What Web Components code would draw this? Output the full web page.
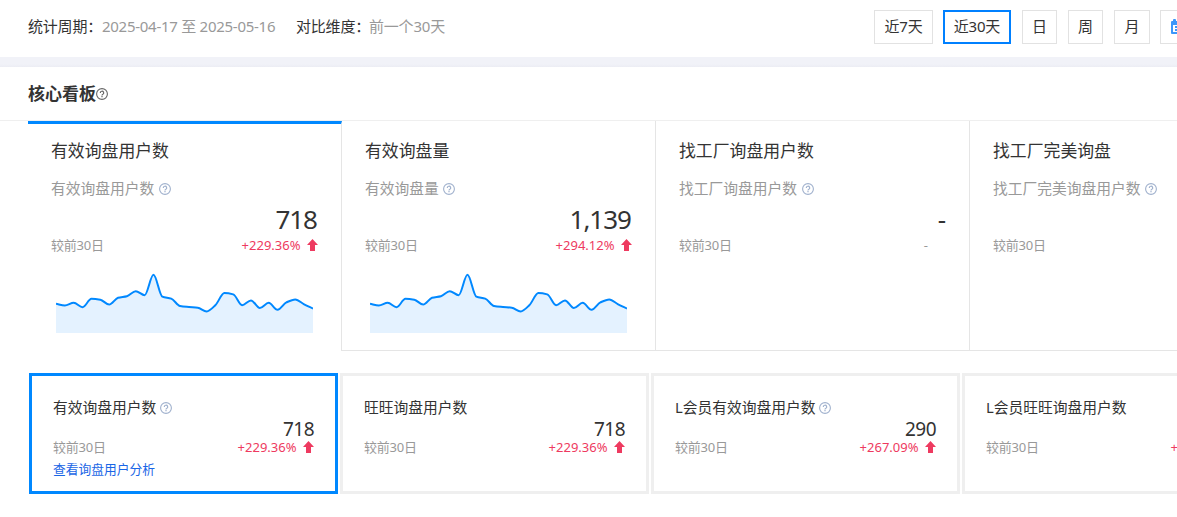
<!DOCTYPE html>
<html lang="zh-CN">
<head>
<meta charset="utf-8">
<title>核心看板</title>
<style>
    body {
        margin: 0;
        width: 1177px;
        height: 517px;
        overflow: hidden;
        background: #fff;
        color: #333;
        font-family: "Noto Sans", "Noto Sans CJK SC", sans-serif;
    }
</style>
</head>
<body>
<dash-board></dash-board>
<script>
class HelpIcon extends HTMLElement {
    constructor() {
        super();
        this.attachShadow({ mode: "open" });
    }

    connectedCallback() {
        this.shadowRoot.innerHTML = `
            <style>
            :host {
                display: block;
                flex: none;
                width: 12px;
                height: 12px;
                color: #a0b1cd;
            }
            svg { display: block; }
            </style>
            <svg width="12" height="12" viewBox="0 0 12 12" fill="none" stroke="currentColor">
                <circle cx="6" cy="6" r="5.4" stroke-width="1.1"/>
                <path d="M4.3 4.9a1.7 1.6 0 1 1 2.6 1.3q-.9.5-.9 1.2" stroke-width="1.2"/>
                <path d="M6 8.1v1.1" stroke-width="1.2"/>
            </svg>
        `;
    }
}
customElements.define("help-icon", HelpIcon);

class TrendRate extends HTMLElement {
    constructor() {
        super();
        this.attachShadow({ mode: "open" });
    }

    connectedCallback() {
        this.shadowRoot.innerHTML = `
            <style>
            :host {
                display: flex;
                align-items: center;
                gap: 6px;
                height: 18px;
                margin-right: 0.5px;
                font-size: 13px;
                line-height: 18px;
                color: #ee3a60;
                white-space: nowrap;
            }
            svg { display: block; }
            </style>
            <span><slot></slot></span>
            <svg width="11" height="12" viewBox="0 0 11 12"><path d="M5.5 0 11 6H8v6H3V6H0z" fill="#ee3a60"/></svg>
        `;
    }
}
customElements.define("trend-rate", TrendRate);

class SparkLine extends HTMLElement {
    constructor() {
        super();
        this.attachShadow({ mode: "open" });
    }

    connectedCallback() {
        this.render();
    }

    // monotone cubic through evenly spaced points
    curve(ys, step) {
        const d = ys.slice(1).map((y, i) => y - ys[i]);
        const m = ys.map((y, i) => {
            if (i === 0) return d[0];
            if (i === ys.length - 1) return d[i - 1];
            const a = d[i - 1], b = d[i];
            return a * b <= 0 ? 0 : (2 * a * b) / (a + b);
        });
        let path = `M0 ${ys[0]}`;
        for (let i = 1; i < ys.length; i++) {
            const x0 = (i - 1) * step, x1 = i * step;
            path += `C${x0 + step / 3} ${ys[i - 1] + m[i - 1] / 3} ${x1 - step / 3} ${ys[i] - m[i] / 3} ${x1} ${ys[i]}`;
        }
        return path;
    }

    render() {
        const ys = [30.8, 32.5, 29.8, 34.2, 25.8, 26.7, 31.6, 24.8, 23.2, 18.2, 22.2, 1.8, 23.6, 25.6, 33,
            34, 34.7, 38.4, 32, 20, 21.4, 32.2, 27.4, 35, 29.8, 36.8, 29.4, 26.4, 31.3, 35.6];
        const line = this.curve(ys, 257 / (ys.length - 1));
        this.shadowRoot.innerHTML = `
            <style>
            :host { display: block; width: 257px; height: 60px; }
            svg { display: block; }
            </style>
            <svg width="257" height="60" viewBox="0 0 257 60">
                <path d="${line}V60H0z" fill="#e4f2ff"/>
                <path d="${line}" fill="none" stroke="#0088ff" stroke-width="2"/>
            </svg>
        `;
    }
}
customElements.define("spark-line", SparkLine);

class DateButton extends HTMLElement {
    constructor() {
        super();
        this.attachShadow({ mode: "open" });
    }

    connectedCallback() {
        this.shadowRoot.innerHTML = `
            <style>
            :host {
                display: flex;
                flex: none;
                align-items: center;
                justify-content: center;
                box-sizing: border-box;
                height: 34px;
                padding-bottom: 2px;
                border: 1px solid #e2e2e2;
                font-size: 15px;
                line-height: 20px;
                letter-spacing: -0.2px;
                white-space: nowrap;
            }
            :host([active]) { border: 2px solid #0080ff; }
            </style>
            <slot></slot>
        `;
    }
}
customElements.define("date-button", DateButton);

class FilterBar extends HTMLElement {
    constructor() {
        super();
        this.attachShadow({ mode: "open" });
    }

    connectedCallback() {
        this.shadowRoot.innerHTML = `
            <style>
            :host {
                display: flex;
                box-sizing: border-box;
                width: 1177px;
                height: 57px;
                padding: 10px 0 0 28px;
                overflow: hidden;
                font-size: 15px;
                line-height: 32px;
                white-space: nowrap;
            }
            .period { flex: none; width: 268px; }
            .compare { flex: none; width: 578px; }
            .value { color: #999; }
            .period .value { letter-spacing: -0.27px; }
            .compare .value { letter-spacing: -0.2px; }
            .label { display: inline-block; width: 74px; letter-spacing: -0.2px; }
            .compare .label { width: 73px; }
            .buttons { display: flex; flex: none; }
            date-button { margin-right: 10px; }
            svg { display: block; flex: none; }
            </style>
            <div class="period"><span class="label">统计周期：</span><span class="value">2025-04-17 至 2025-05-16</span></div>
            <div class="compare"><span class="label">对比维度：</span><span class="value">前一个30天</span></div>
            <div class="buttons">
                <date-button style="width:59px">近7天</date-button>
                <date-button active style="width:68px;margin-right:11px">近30天</date-button>
                <date-button style="width:35px;margin-right:11px">日</date-button>
                <date-button style="width:35px;margin-right:11px">周</date-button>
                <date-button style="width:36px">月</date-button>
                <date-button style="width:36px">
                    <svg width="14" height="15" viewBox="0 0 14 15">
                        <path d="M1 2h1V1q0-1 1-1h1q1 0 1 1v1h4V1q0-1 1-1h1q1 0 1 1v1h1q1 0 1 1v11q0 1-1 1H1q-1 0-1-1V3q0-1 1-1z" fill="#3c96fa"/>
                        <path d="M2 6h10v7H2z" fill="#fff"/>
                        <path d="M4 7h2v2H4zM8 7h2v2H8zM4 10h2v2H4zM8 10h2v2H8z" fill="#3c96fa"/>
                    </svg>
                </date-button>
            </div>
        `;
    }
}
customElements.define("filter-bar", FilterBar);

class MetricTab extends HTMLElement {
    constructor() {
        super();
        this.attachShadow({ mode: "open" });
    }

    connectedCallback() {
        this.render();
    }

    render() {
        const value = this.getAttribute("value");
        const rate = this.getAttribute("rate");
        this.shadowRoot.innerHTML = `
            <style>
            :host {
                display: flex;
                flex: none;
                flex-direction: column;
                box-sizing: border-box;
                width: 314px;
                height: 230px;
                padding: 17px 23px 0;
                border-right: 1px solid #e5e5e5;
                border-bottom: 1px solid #e5e5e5;
                white-space: nowrap;
            }
            :host([active]) {
                padding-top: 14px;
                border-top: 3px solid #0088ff;
                border-bottom: 0;
            }
            .title { height: 26px; font-size: 16.85px; line-height: 26px; }
            .sub {
                display: flex;
                align-items: center;
                gap: 4.5px;
                height: 22px;
                margin-top: 13px;
                color: #999;
                font-size: 14.75px;
                line-height: 22px;
            }
            .sub help-icon { margin-top: 2px; }
            .value {
                height: 34px;
                margin-top: 3px;
                padding-right: 1px;
                font-size: 26px;
                line-height: 34px;
                letter-spacing: -1px;
                text-align: right;
            }
            .row {
                display: flex;
                justify-content: space-between;
                height: 18px;
                color: #999;
                font-size: 13px;
                line-height: 18px;
            }
            .days { letter-spacing: -0.2px; }
            .none { padding-right: 18px; }
            spark-line { margin: 19px 0 0 5px; }
            </style>
            <div class="title"><slot></slot></div>
            <div class="sub"><span>${this.getAttribute("sub")}</span><help-icon></help-icon></div>
            <div class="value">${value || ""}</div>
            <div class="row">
                <span class="days">较前30日</span>
                ${rate ? `<trend-rate>${rate}</trend-rate>` : value ? `<span class="none">-</span>` : ""}
            </div>
            ${rate ? "<spark-line></spark-line>" : ""}
        `;
    }
}
customElements.define("metric-tab", MetricTab);

class MetricCard extends HTMLElement {
    constructor() {
        super();
        this.attachShadow({ mode: "open" });
    }

    connectedCallback() {
        const link = this.getAttribute("link");
        this.shadowRoot.innerHTML = `
            <style>
            :host {
                display: flex;
                flex: none;
                flex-direction: column;
                box-sizing: border-box;
                width: 309px;
                height: 121px;
                padding: 20px 21px 0;
                border: 3px solid #efefef;
                white-space: nowrap;
            }
            :host([active]) { border-color: #0088ff; }
            .title {
                display: flex;
                align-items: center;
                gap: 4px;
                height: 22px;
                font-size: 14.75px;
                line-height: 22px;
            }
            .title help-icon { margin-top: 1px; }
            .value {
                height: 20px;
                font-size: 19px;
                line-height: 22px;
                letter-spacing: -0.5px;
                text-align: right;
            }
            .row {
                display: flex;
                justify-content: space-between;
                height: 18px;
                color: #999;
                font-size: 13px;
                line-height: 18px;
            }
            .days { letter-spacing: -0.2px; }
            a {
                margin-top: 3px;
                color: #1a66e6;
                font-size: 12.75px;
                line-height: 20px;
            }
            </style>
            <div class="title"><slot></slot>${this.hasAttribute("help") ? "<help-icon></help-icon>" : ""}</div>
            <div class="value">${this.getAttribute("value") || ""}</div>
            <div class="row"><span class="days">较前30日</span><trend-rate>${this.getAttribute("rate")}</trend-rate></div>
            ${link ? `<a>${link}</a>` : ""}
        `;
    }
}
customElements.define("metric-card", MetricCard);

class DashBoard extends HTMLElement {
    constructor() {
        super();
        this.attachShadow({ mode: "open" });
    }

    connectedCallback() {
        this.shadowRoot.innerHTML = `
            <style>
            :host { display: block; width: 1177px; height: 517px; overflow: hidden; }
            .gap { height: 10px; background: linear-gradient(#f1f2f8 70%, #ecedf4); }
            .head {
                display: flex;
                align-items: center;
                box-sizing: border-box;
                height: 54px;
                padding-left: 28px;
                border-bottom: 1px solid #efefef;
            }
            h2 { margin: 1px 0 0; font-size: 17px; line-height: 24px; font-weight: 700; }
            .head help-icon { color: #666; }
            .tabs { display: flex; padding-left: 28px; }
            .cards { display: flex; gap: 2px; padding: 22px 0 0 29px; }
            </style>
            <filter-bar></filter-bar>
            <div class="gap"></div>
            <div class="head"><h2>核心看板</h2><help-icon></help-icon></div>
            <div class="tabs">
                <metric-tab active sub="有效询盘用户数" value="718" rate="+229.36%">有效询盘用户数</metric-tab>
                <metric-tab sub="有效询盘量" value="1,139" rate="+294.12%">有效询盘量</metric-tab>
                <metric-tab sub="找工厂询盘用户数" value="-">找工厂询盘用户数</metric-tab>
                <metric-tab sub="找工厂完美询盘用户数">找工厂完美询盘</metric-tab>
            </div>
            <div class="cards">
                <metric-card active help value="718" rate="+229.36%" link="查看询盘用户分析">有效询盘用户数</metric-card>
                <metric-card value="718" rate="+229.36%">旺旺询盘用户数</metric-card>
                <metric-card help value="290" rate="+267.09%">L会员有效询盘用户数</metric-card>
                <metric-card rate="+229.36%">L会员旺旺询盘用户数</metric-card>
            </div>
        `;
    }
}
customElements.define("dash-board", DashBoard);
</script>
</body>
</html>
